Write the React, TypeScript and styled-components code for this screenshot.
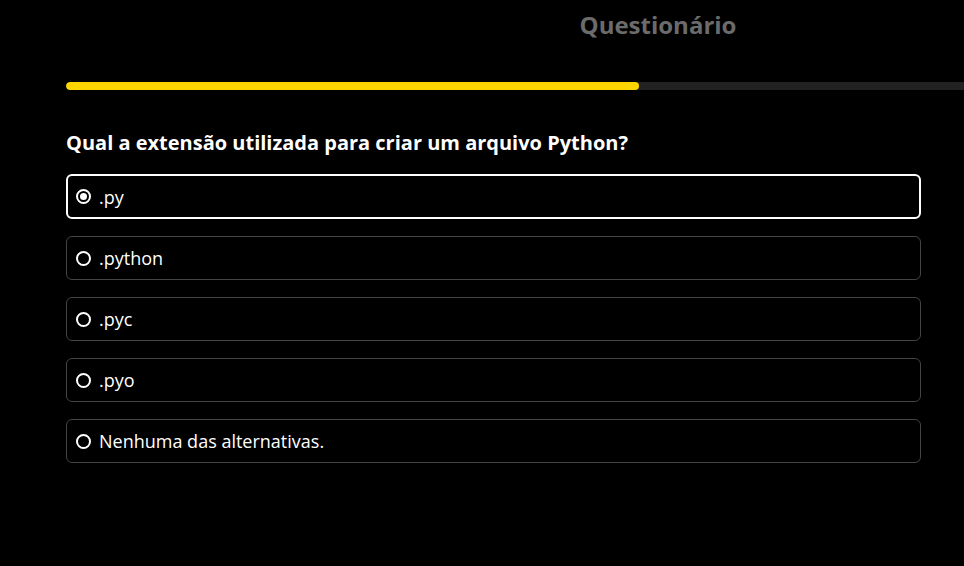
import React, { useState } from "react";
import styled, { createGlobalStyle } from "styled-components";

const Global = createGlobalStyle`
  html, body { margin: 0; padding: 0; background: #000; }
  body { font-family: "Open Sans", "Liberation Sans", sans-serif; color: #fff; overflow: hidden; }
`;

const Page = styled.div`
  width: 964px;
  height: 566px;
  overflow: hidden;
  padding-left: 66px;
  box-sizing: border-box;
`;

const Column = styled.div`
  width: 1184px;
  display: flex;
  flex-direction: column;
`;

const Title = styled.h1`
  margin: 8px 0 0;
  text-align: center;
  font-size: 24px;
  line-height: 34px;
  font-weight: 700;
  color: #6b6b6b;
`;

const Track = styled.div`
  margin-top: 40px;
  height: 8px;
  border-radius: 4px;
  background: #222;
  overflow: hidden;
`;

const Fill = styled.div`
  height: 100%;
  background: #ffd500;
  border-radius: 4px;
`;

const Question = styled.h2`
  margin: 40px 0 0;
  font-size: 20px;
  line-height: 26px;
  font-weight: 700;
  color: #fff;
`;

const Options = styled.div`
  margin-top: 18px;
  width: 855px;
  display: flex;
  flex-direction: column;
  gap: 17px;
`;

const Option = styled.label<{ $selected: boolean }>`
  height: ${(p) => (p.$selected ? "45px" : "44px")};
  box-sizing: border-box;
  display: flex;
  align-items: center;
  gap: 8px;
  padding-left: ${(p) => (p.$selected ? "8px" : "9px")};
  border: ${(p) => (p.$selected ? "2px solid #fff" : "1px solid #444")};
  border-radius: 6px;
  cursor: pointer;
  font-size: 18px;
  color: #fff;
`;

const Radio = styled.span<{ $selected: boolean }>`
  width: 15px;
  height: 15px;
  box-sizing: border-box;
  border-radius: 50%;
  border: 2px solid #fff;
  display: flex;
  align-items: center;
  justify-content: center;
  &::after {
    content: "";
    width: 7px;
    height: 7px;
    border-radius: 50%;
    background: #fff;
    display: ${(p) => (p.$selected ? "block" : "none")};
  }
`;

const answers = [".py", ".python", ".pyc", ".pyo", "Nenhuma das alternativas."];

export default function App() {
  const [sel, setSel] = useState(0);
  const progress = 573;
  return (
    <Page>
      <Global />
      <Column>
        <Title>Questionário</Title>
        <Track>
          <Fill style={{ width: progress }} />
        </Track>
        <Question>Qual a extensão utilizada para criar um arquivo Python?</Question>
        <Options>
          {answers.map((a, i) => (
            <Option key={a} $selected={sel === i} onClick={() => setSel(i)}>
              <Radio $selected={sel === i} />
              {a}
            </Option>
          ))}
        </Options>
      </Column>
    </Page>
  );
}
